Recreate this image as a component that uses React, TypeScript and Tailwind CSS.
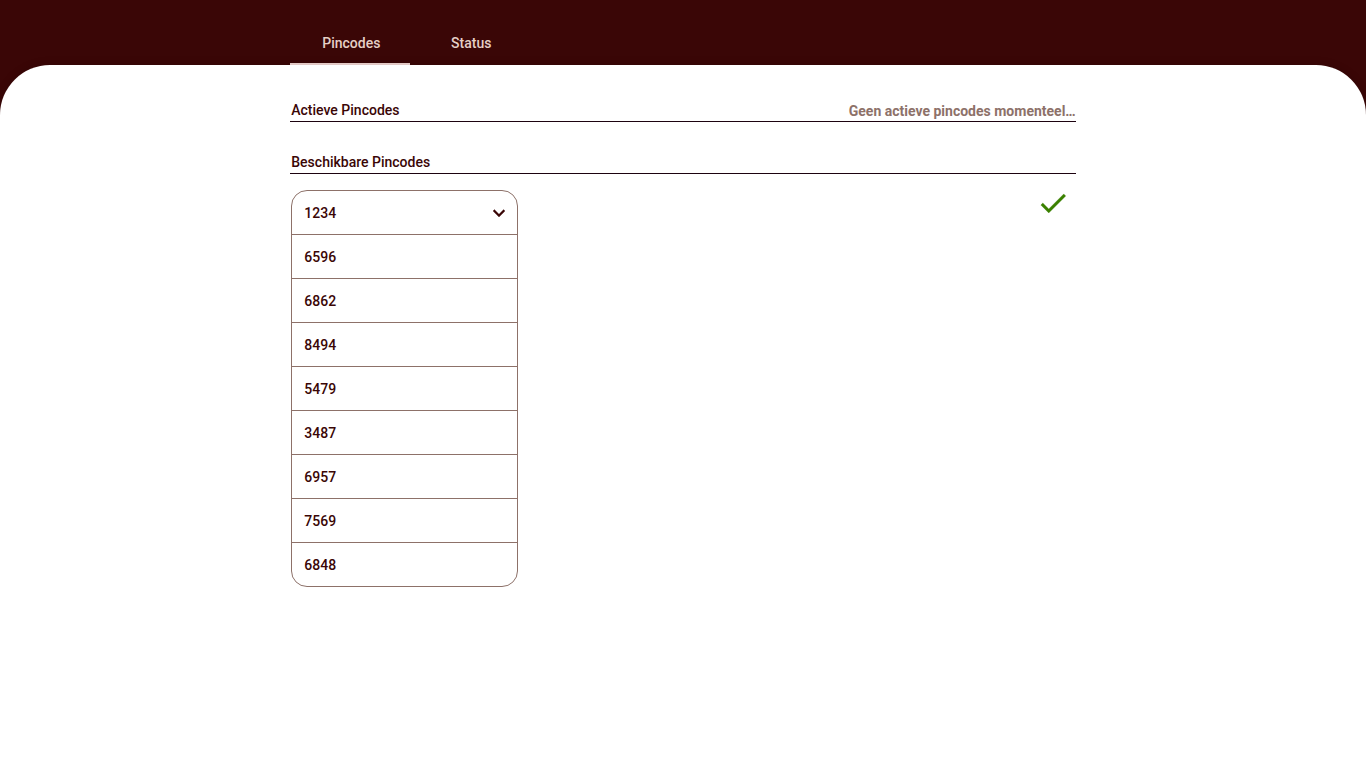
import { useState } from "react";

const tabs = ["Pincodes", "Status"];
const pincodes = ["1234", "6596", "6862", "8494", "5479", "3487", "6957", "7569", "6848"];

function ChevronIcon() {
  return (
    <svg viewBox="0 0 24 24" aria-hidden="true" className="size-6 fill-current stroke-current">
      <path strokeWidth="0.3" d="M16.59 8.59 12 13.17 7.41 8.59 6 10l6 6 6-6z" />
    </svg>
  );
}

function CheckIcon() {
  return (
    <svg viewBox="0 0 24 24" aria-hidden="true" className="size-[34px] fill-current stroke-current">
      <path strokeWidth="0.2" d="M9 16.17 4.83 12l-1.42 1.41L9 19 21 7l-1.41-1.41z" />
    </svg>
  );
}

function Tabs({ active, onSelect }: { active: string; onSelect: (tab: string) => void }) {
  return (
    <nav role="tablist" className="mx-auto flex h-[65px] w-[57.5%]">
      {tabs.map((tab) => (
        <button
          key={tab}
          type="button"
          role="tab"
          aria-selected={tab === active}
          onClick={() => onSelect(tab)}
          className={`w-[120px] border-b-2 pt-[23px] pl-0.5 text-sm font-medium text-[#e6cfc6] ${
            tab === active ? "border-[#f2d6d2]" : "border-transparent"
          }`}
        >
          {tab}
        </button>
      ))}
    </nav>
  );
}

function PincodeSelect() {
  const [open, setOpen] = useState(true);
  const [selected, setSelected] = useState(pincodes[0]);
  const choices = pincodes.filter((code) => code !== selected);

  return (
    <div className="w-[227px] overflow-hidden rounded-2xl border border-[#8d7169] font-medium">
      <button
        type="button"
        aria-label="Pincode"
        aria-haspopup="listbox"
        aria-expanded={open}
        onClick={() => setOpen(!open)}
        className="flex h-[43px] w-full items-center justify-between pr-1.5 pl-3"
      >
        {selected}
        <ChevronIcon />
      </button>
      {open && (
        <ul role="listbox" aria-label="Pincodes">
          {choices.map((code) => (
            <li key={code} role="option" aria-selected={false} className="border-t border-[#8d7169]">
              <button
                type="button"
                onClick={() => setSelected(code)}
                className="h-[43px] w-full px-3 text-left"
              >
                {code}
              </button>
            </li>
          ))}
        </ul>
      )}
    </div>
  );
}

export default function App() {
  const [active, setActive] = useState(tabs[0]);

  return (
    <div className="flex min-h-screen flex-col bg-[#3a0606] font-['Roboto',sans-serif] text-sm text-[#3a0606]">
      <Tabs active={active} onSelect={setActive} />
      <main className="grow rounded-t-[50px] bg-white pt-[35px] shadow-[0_0_10px_rgba(0,0,0,0.15)]">
        <div className="mx-auto w-[57.5%]">
          <section className="flex h-[22px] justify-between border-b border-[#1d0310]">
            <h2 className="pl-px font-medium">Actieve Pincodes</h2>
            <p className="pt-px font-bold text-[#8d7169]">Geen actieve pincodes momenteel…</p>
          </section>
          <section className="pt-[30px]">
            <h2 className="h-[22px] border-b border-[#1d0310] pl-px font-medium">Beschikbare Pincodes</h2>
            <div className="flex items-start justify-between pt-4 pr-1.5 pl-px">
              <PincodeSelect />
              <button type="button" aria-label="Bevestigen" className="-mt-1 text-[#3a8000]">
                <CheckIcon />
              </button>
            </div>
          </section>
        </div>
      </main>
    </div>
  );
}
